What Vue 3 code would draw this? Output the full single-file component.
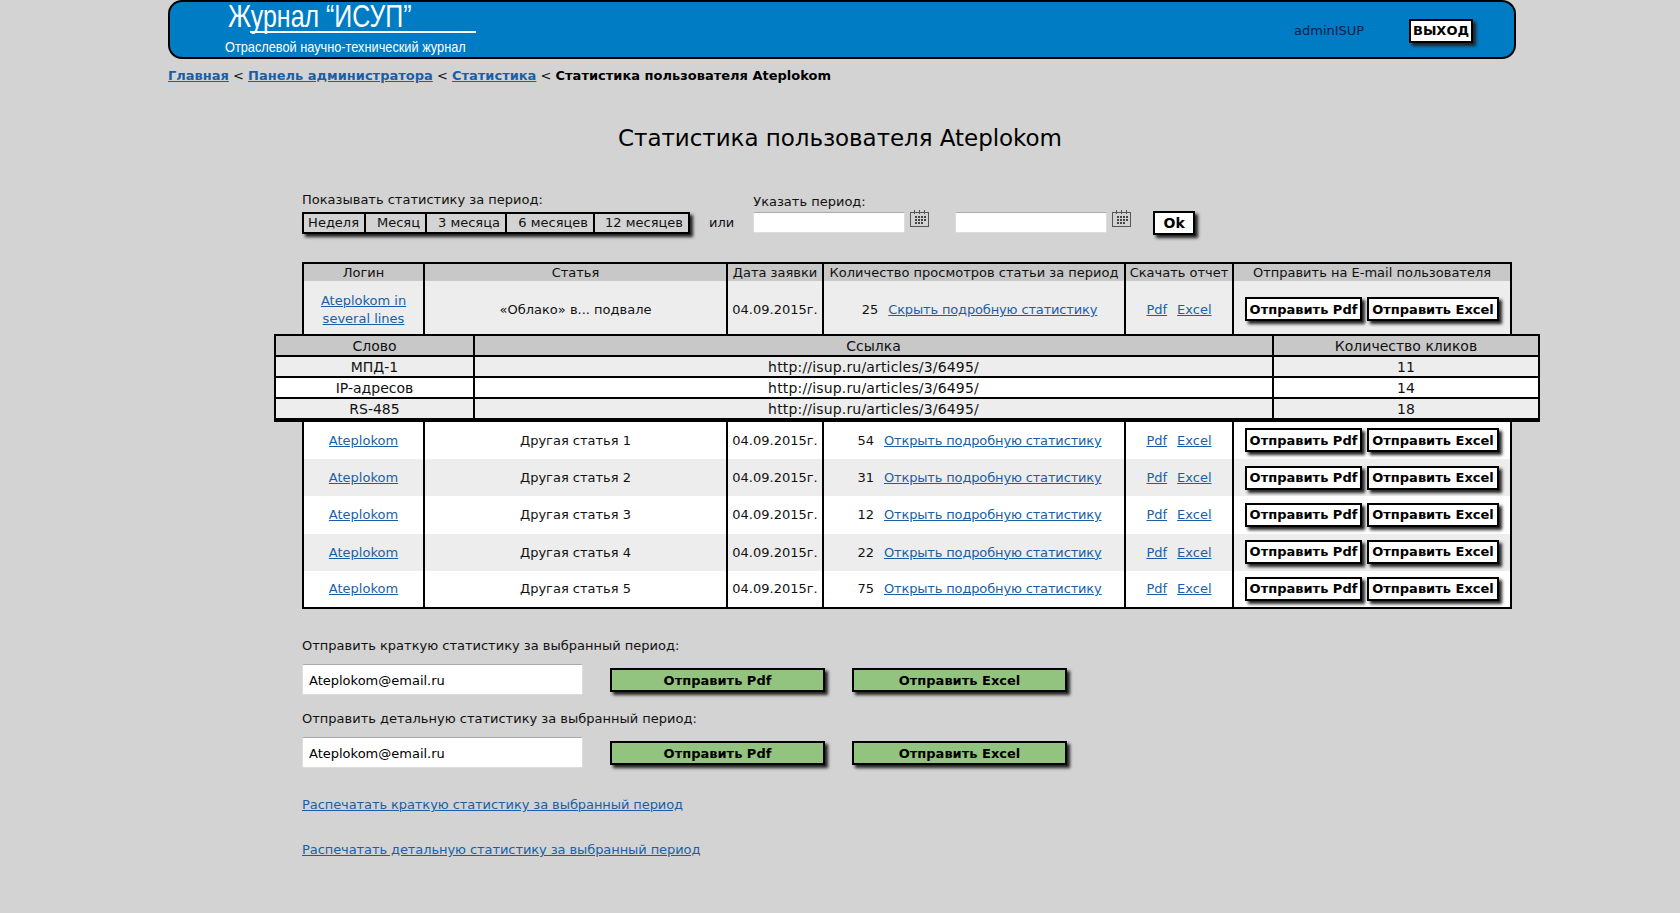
<script setup>
const periods = [
  { label: 'Неделя', width: 60 },
  { label: 'Месяц', width: 61 },
  { label: '3 месяца', width: 80 },
  { label: '6 месяцев', width: 88 },
  { label: '12 месяцев', width: 95 }
]

const clicks = [
  { word: 'МПД-1', url: 'http://isup.ru/articles/3/6495/', count: 11 },
  { word: 'IP-адресов', url: 'http://isup.ru/articles/3/6495/', count: 14 },
  { word: 'RS-485', url: 'http://isup.ru/articles/3/6495/', count: 18 }
]

const rows = [
  { title: 'Другая статья 1', views: 54 },
  { title: 'Другая статья 2', views: 31 },
  { title: 'Другая статья 3', views: 12 },
  { title: 'Другая статья 4', views: 22 },
  { title: 'Другая статья 5', views: 75 }
]

const sendBlocks = [
  'Отправить краткую статистику за выбранный период:',
  'Отправить детальную статистику за выбранный период:'
]
</script>

<template>
  <div class="page">
    <header class="top">
      <div class="logo">
        <div class="logo-name">Журнал “ИСУП”</div>
        <div class="logo-line"></div>
        <div class="logo-sub">Отраслевой научно-технический журнал</div>
      </div>
      <span class="user">adminISUP</span>
      <button class="btn logout">ВЫХОД</button>
    </header>

    <nav class="crumbs">
      <a href="#">Главная</a> &lt; <a href="#">Панель администратора</a> &lt;
      <a href="#">Статистика</a> &lt; <b>Статистика пользователя Ateplokom</b>
    </nav>

    <h1 class="title">Статистика пользователя Ateplokom</h1>

    <div class="content">
      <div class="filters">
        <div class="period">
          <div class="label">Показывать статистику за период:</div>
          <div class="period-group">
            <span
              v-for="p in periods"
              :key="p.label"
              class="period-item"
              :style="{ width: p.width + 'px' }"
            >{{ p.label }}</span>
          </div>
        </div>
        <span class="or">или</span>
        <div class="range">
          <div class="label">Указать период:</div>
          <div class="range-row">
            <template v-for="n in 2" :key="n">
              <input class="date" type="text" />
              <svg class="cal" width="20" height="19" viewBox="0 0 20 19">
                <rect x="0.5" y="3.5" width="18" height="14" fill="none" stroke="#555" />
                <path d="M4.5 1v4M9.5 1v4M14.5 1v4" stroke="#555" />
                <path d="M5 8h2M8 8h2M11 8h2M14 8h2M5 11h2M8 11h2M11 11h2M14 11h2M5 14h2M8 14h2M11 14h2" stroke="#444" stroke-width="2" />
              </svg>
            </template>
            <button class="btn ok">Ok</button>
          </div>
        </div>
      </div>

      <table class="stats">
        <colgroup>
          <col class="c-login" />
          <col class="c-article" />
          <col class="c-date" />
          <col class="c-views" />
          <col class="c-report" />
          <col class="c-mail" />
        </colgroup>
        <thead>
          <tr>
            <th>Логин</th>
            <th>Статья</th>
            <th>Дата заявки</th>
            <th>Количество просмотров статьи за период</th>
            <th>Скачать отчет</th>
            <th>Отправить на E-mail пользователя</th>
          </tr>
        </thead>
        <tbody>
          <tr class="grey first">
            <td><a href="#">Ateplokom in<br />several lines</a></td>
            <td>«Облако» в... подвале</td>
            <td>04.09.2015г.</td>
            <td class="views">
              <span class="count">25</span>
              <a class="more" href="#">Скрыть подробную статистику</a>
            </td>
            <td class="report"><a href="#">Pdf</a><a href="#">Excel</a></td>
            <td class="mail">
              <button class="btn send-pdf">Отправить Pdf</button>
              <button class="btn send-xls">Отправить Excel</button>
            </td>
          </tr>
          <tr>
            <td colspan="6" class="detail-cell">
              <table class="detail">
                <colgroup>
                  <col class="d-word" />
                  <col class="d-url" />
                  <col class="d-count" />
                </colgroup>
                <thead>
                  <tr>
                    <th>Слово</th>
                    <th>Ссылка</th>
                    <th>Количество кликов</th>
                  </tr>
                </thead>
                <tbody>
                  <tr v-for="c in clicks" :key="c.word">
                    <td>{{ c.word }}</td>
                    <td class="url">{{ c.url }}</td>
                    <td>{{ c.count }}</td>
                  </tr>
                </tbody>
              </table>
            </td>
          </tr>
          <tr v-for="(r, i) in rows" :key="r.title" class="plain" :class="{ grey: i % 2 === 1 }">
            <td><a href="#">Ateplokom</a></td>
            <td>{{ r.title }}</td>
            <td>04.09.2015г.</td>
            <td class="views">
              <span class="count">{{ r.views }}</span>
              <a class="more" href="#">Открыть подробную статистику</a>
            </td>
            <td class="report"><a href="#">Pdf</a><a href="#">Excel</a></td>
            <td class="mail">
              <button class="btn send-pdf">Отправить Pdf</button>
              <button class="btn send-xls">Отправить Excel</button>
            </td>
          </tr>
        </tbody>
      </table>

      <div v-for="text in sendBlocks" :key="text" class="send">
        <div class="label">{{ text }}</div>
        <div class="send-row">
          <input class="email" type="text" value="Ateplokom@email.ru" />
          <button class="btn green">Отправить Pdf</button>
          <button class="btn green">Отправить Excel</button>
        </div>
      </div>

      <div class="prints">
        <a href="#">Распечатать краткую статистику за выбранный период</a>
        <a href="#">Распечатать детальную статистику за выбранный период</a>
      </div>
    </div>
  </div>
</template>

<style>
html, body {
  background: #d3d3d3;
}
</style>

<style scoped>
.page {
  width: 1347px;
  margin-left: 168px;
  min-height: 913px;
  font-family: "DejaVu Sans", Verdana, sans-serif;
  font-size: 13px;
  color: #111;
}

a {
  color: #1a5fa6;
}

.top {
  box-sizing: border-box;
  width: 1348px;
  height: 59px;
  background: #007cc5;
  border: 2px solid #000;
  border-radius: 14px;
  display: flex;
  align-items: center;
  overflow: hidden;
}

.logo {
  width: 1124px;
  padding-left: 58px;
  box-sizing: border-box;
  align-self: flex-start;
  color: #fff;
  font-family: "Liberation Sans", Arial, sans-serif;
}

.logo-name {
  font-size: 32px;
  line-height: 30px;
  margin-top: -1px;
  white-space: nowrap;
  transform: scaleX(0.78);
  transform-origin: left;
}

.logo-line {
  width: 226px;
  height: 2px;
  margin-left: 22px;
  background: #fff;
}

.logo-sub {
  font-size: 15px;
  line-height: 16px;
  margin: 6px 0 0 -3px;
  white-space: nowrap;
  transform: scaleX(0.85);
  transform-origin: left;
}

.user {
  width: 115px;
  color: #0a1f45;
  padding-top: 2px;
}

.btn {
  box-sizing: border-box;
  padding: 0;
  background: #fff;
  border: 2px solid #000;
  box-shadow: 3px 3px 3px #222;
  color: #000;
  font-family: "DejaVu Sans", Verdana, sans-serif;
  font-size: 13px;
  font-weight: bold;
  cursor: pointer;
}

.logout {
  width: 64px;
  height: 24px;
  margin-top: 2px;
}

.crumbs {
  margin-top: 9px;
  line-height: 16px;
  font-size: 13px;
}

.crumbs a,
.crumbs b {
  font-weight: bold;
  color: #000;
}

.crumbs a {
  color: #1a5fa6;
}

.title {
  margin: 40px 0 0;
  padding-right: 3px;
  text-align: center;
  font-size: 23px;
  line-height: 28px;
  font-weight: normal;
  letter-spacing: -0.05px;
  color: #000;
}

.content {
  width: 1210px;
  margin-left: 134px;
}

.filters {
  display: flex;
  height: 70px;
  margin-top: 40px;
}

.label {
  line-height: 16px;
}

.period-group {
  display: flex;
  width: fit-content;
  margin-top: 4px;
  background: #d3d3d3;
  border: 2px solid #000;
  box-shadow: 3px 3px 3px #222;
}

.period-item {
  box-sizing: border-box;
  height: 18px;
  line-height: 18px;
  padding-right: 5px;
  text-align: right;
  border-left: 2px solid #000;
}

.period-item:first-child {
  border-left: 0;
}

.or {
  margin: 23px 0 0 19px;
  line-height: 16px;
}

.range {
  margin: 2px 0 0 19px;
}

.range-row {
  display: flex;
  align-items: flex-start;
}

.date {
  box-sizing: border-box;
  width: 152px;
  height: 21px;
  margin-top: 2px;
  background: #fff;
  border: 1px solid #dcdce4;
  border-top-color: #aaa;
  border-radius: 2px;
}

.cal {
  margin: -1px 25px 0 5px;
}

.cal:nth-of-type(2) {
  margin-right: 21px;
}

.ok {
  width: 42px;
  height: 24px;
  margin-top: 1px;
  font-size: 14px;
}

.stats {
  width: 1210px;
  table-layout: fixed;
  border-collapse: collapse;
  border: 2px solid #000;
  text-align: center;
}

.c-login { width: 121px; }
.c-article { width: 303px; }
.c-date { width: 96px; }
.c-views { width: 302px; }
.c-report { width: 108px; }
.c-mail { width: 278px; }

.stats th {
  height: 17px;
  padding: 0;
  background: #c8c8c8;
  border-left: 2px solid #000;
  border-right: 2px solid #000;
  font-weight: normal;
  white-space: nowrap;
}

.stats td {
  padding: 0;
  background: #fff;
  border-left: 2px solid #000;
  border-right: 2px solid #000;
  line-height: 18px;
  white-space: nowrap;
}

.stats .grey td {
  background: #ededed;
}

.first td {
  box-sizing: border-box;
  height: 53px;
  padding-top: 5px;
}

.plain td {
  box-sizing: border-box;
  height: 37.2px;
  padding-top: 1px;
}

.stats .views {
  padding-left: 11px;
}

.count {
  margin-right: 10px;
}

.more {
  letter-spacing: -0.15px;
}

.report a + a {
  margin-left: 10px;
}

.mail {
  font-size: 0;
}

.send-pdf {
  width: 117px;
  height: 24px;
}

.send-xls {
  width: 132px;
  height: 24px;
  margin-left: 5px;
}

.stats .detail-cell {
  height: 87px;
  padding: 0;
  border: 0;
  background: transparent;
  vertical-align: top;
}

.detail {
  position: relative;
  z-index: 1;
  width: 1264px;
  margin-left: -30px;
  table-layout: fixed;
  border-collapse: collapse;
  border: 2px solid #000;
  border-bottom-width: 4px;
  font-size: 14px;
  text-align: center;
}

.d-word { width: 199px; }
.d-url { width: 799px; }
.d-count { width: 266px; }

.stats .detail th,
.stats .detail td {
  box-sizing: border-box;
  height: 21px;
  padding: 1px 0 0;
  line-height: 18px;
  border: 2px solid #000;
}

.stats .detail .url {
  letter-spacing: 0.17px;
}

.stats .detail tbody tr:last-child td {
  border-bottom-width: 4px;
}

.stats .detail tbody tr:nth-child(odd) td {
  background: #ededed;
}

.send {
  margin-top: 29px;
}

.send + .send {
  margin-top: 16px;
}

.send-row {
  display: flex;
  align-items: center;
  margin-top: 10px;
}

.email {
  box-sizing: border-box;
  width: 281px;
  height: 31px;
  padding: 2px 6px 0;
  background: #fff;
  border: 1px solid #dcdce4;
  border-top-color: #aaa;
  border-radius: 2px;
  color: #000;
  font-family: "DejaVu Sans", Verdana, sans-serif;
  font-size: 13px;
}

.green {
  width: 215px;
  height: 24px;
  margin: 2px 0 0 27px;
  background: #93c47f;
}

.prints {
  display: flex;
  flex-direction: column;
  align-items: flex-start;
  gap: 29px;
  margin-top: 29px;
  line-height: 16px;
  letter-spacing: -0.08px;
}
</style>
